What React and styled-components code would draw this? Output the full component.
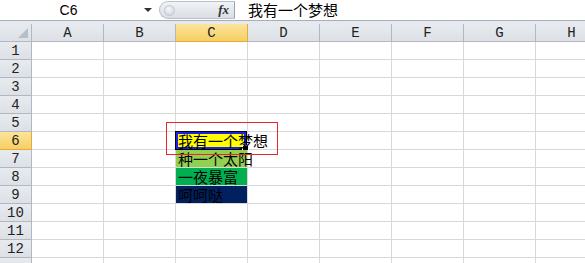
import React from "react";
import styled, { createGlobalStyle } from "styled-components";

const Global = createGlobalStyle`
	html, body {
		margin: 0;
		padding: 0;
		background: #ffffff;
		overflow: hidden;
	}
	#root {
		width: 585px;
		height: 263px;
		overflow: hidden;
	}
`;

const COLS = ["A", "B", "C", "D", "E", "F", "G", "H"];
const ROWS = 13;

const cells = {
	"C6": { text: "我有一个梦想", fill: "#ffff00" },
	"C7": { text: "种一个太阳", fill: "#92d050" },
	"C8": { text: "一夜暴富", fill: "#00b050" },
	"C9": { text: "呵呵哒", fill: "#002060" },
};

const Page = styled.div`
	position: relative;
	width: 585px;
	height: 263px;
	overflow: hidden;
	background: #ffffff;
`;

const FormulaBar = styled.div`
	display: flex;
	align-items: center;
	height: 20px;
	border-bottom: 1px solid #a7aeb8;
	background: #ffffff;
`;

const NameBox = styled.div`
	width: 137px;
	text-align: center;
	font-family: "Liberation Sans", Arial, sans-serif;
	font-size: 14px;
	color: #000;
	line-height: 20px;
`;

const Arrow = styled.div`
	width: 0;
	height: 0;
	margin-left: 7px;
	border-left: 4px solid transparent;
	border-right: 4px solid transparent;
	border-top: 4px solid #333;
`;

const FxPill = styled.div`
	display: flex;
	align-items: center;
	justify-content: space-between;
	box-sizing: border-box;
	margin-left: 7px;
	width: 76px;
	height: 18px;
	padding: 0 5px 0 4px;
	border: 1px solid #b9c0ca;
	border-right: 1px solid #9aa3ae;
	border-radius: 9px 0 0 9px;
	background: linear-gradient(#f1f3f5, #dadee4);
`;

const Knob = styled.div`
	width: 9px;
	height: 9px;
	border-radius: 50%;
	background: radial-gradient(circle at 40% 35%, #f7f8fa, #c9ced5);
	border: 1px solid #c2c8d0;
`;

const Fx = styled.span`
	font-family: "Liberation Serif", "Times New Roman", serif;
	font-style: italic;
	font-weight: bold;
	font-size: 13px;
	color: #333;
`;

const FormulaText = styled.div`
	flex: 1;
	padding-left: 13px;
	font-family: "Noto Sans CJK SC", sans-serif;
	font-size: 15px;
	line-height: 20px;
	color: #000;
	white-space: nowrap;
`;

const Band = styled.div`
	height: 3px;
	background: #e6e9ee;
`;

const Grid = styled.div`
	display: grid;
	grid-template-columns: 32px repeat(8, 72px);
	grid-auto-rows: 18px;
`;

const Header = styled.div`
	box-sizing: border-box;
	display: flex;
	align-items: center;
	justify-content: center;
	font-family: "Liberation Mono", "DejaVu Sans Mono", monospace;
	font-size: 14px;
	color: #222;
	border-right: 1px solid ${(p) => (p.$active ? "#e7a93c" : "#b1b8c2")};
	border-bottom: 1px solid ${(p) => (p.$active ? "#e7a93c" : "#b1b8c2")};
	background: ${(p) =>
		p.$active
			? "linear-gradient(#fbe49c, #f6cf63)"
			: "linear-gradient(#e7eaee, #dde1e6)"};
`;

const Corner = styled(Header)`
	position: relative;
	&::after {
		content: "";
		position: absolute;
		right: 3px;
		bottom: 3px;
		border-left: 10px solid transparent;
		border-bottom: 10px solid #b9bec6;
	}
`;

const Cell = styled.div`
	position: relative;
	box-sizing: border-box;
	border-right: 1px solid #d8d8d8;
	border-bottom: 1px solid #d8d8d8;
	background: ${(p) => p.$fill || "transparent"};
	${(p) => (p.$text ? "z-index: 2;" : "")}
`;

const CellText = styled.span`
	position: absolute;
	left: 2px;
	bottom: 0;
	font-family: "Noto Sans CJK SC", sans-serif;
	font-size: 15px;
	line-height: 17px;
	color: #000;
	white-space: nowrap;
	z-index: 3;
`;

const Selection = styled.div`
	position: absolute;
	left: -1px;
	top: -1px;
	right: 0;
	bottom: -1px;
	border: 1px solid #000;
	box-shadow: inset 0 0 0 2px #1f1fe6;
	z-index: 2;
	&::after {
		content: "";
		position: absolute;
		right: -3px;
		bottom: -3px;
		width: 5px;
		height: 5px;
		background: #000;
		border: 1px solid #fff;
	}
`;

const Underline = styled.div`
	position: absolute;
	left: 0;
	right: 0;
	bottom: -2px;
	height: 2px;
	background: #7030a0;
`;

const Annotation = styled.div`
	position: absolute;
	left: 166px;
	top: 122px;
	width: 110px;
	height: 31px;
	border: 1px solid #e8262b;
	z-index: 10;
	pointer-events: none;
`;

const App = () => {
	const rows = [];
	for (let r = 1; r <= ROWS; r++) {
		rows.push(
			<React.Fragment key={r}>
				<Header $active={r === 6}>{r < ROWS ? r : ""}</Header>
				{COLS.map((c) => {
					const id = c + r;
					const data = cells[id];
					return (
						<Cell key={id} $fill={data && data.fill} $text={!!data}>
							{data && <CellText>{data.text}</CellText>}
							{id === "C6" && (
								<>
									<Selection />
									<Underline />
								</>
							)}
						</Cell>
					);
				})}
			</React.Fragment>
		);
	}

	return (
		<Page>
			<Global />
			<FormulaBar>
				<NameBox>C6</NameBox>
				<Arrow />
				<FxPill>
					<Knob />
					<Fx>fx</Fx>
				</FxPill>
				<FormulaText>我有一个梦想</FormulaText>
			</FormulaBar>
			<Band />
			<Grid>
				<Corner />
				{COLS.map((c) => (
					<Header key={c} $active={c === "C"}>
						{c}
					</Header>
				))}
				{rows}
			</Grid>
			<Annotation />
		</Page>
	);
};

export default App;
